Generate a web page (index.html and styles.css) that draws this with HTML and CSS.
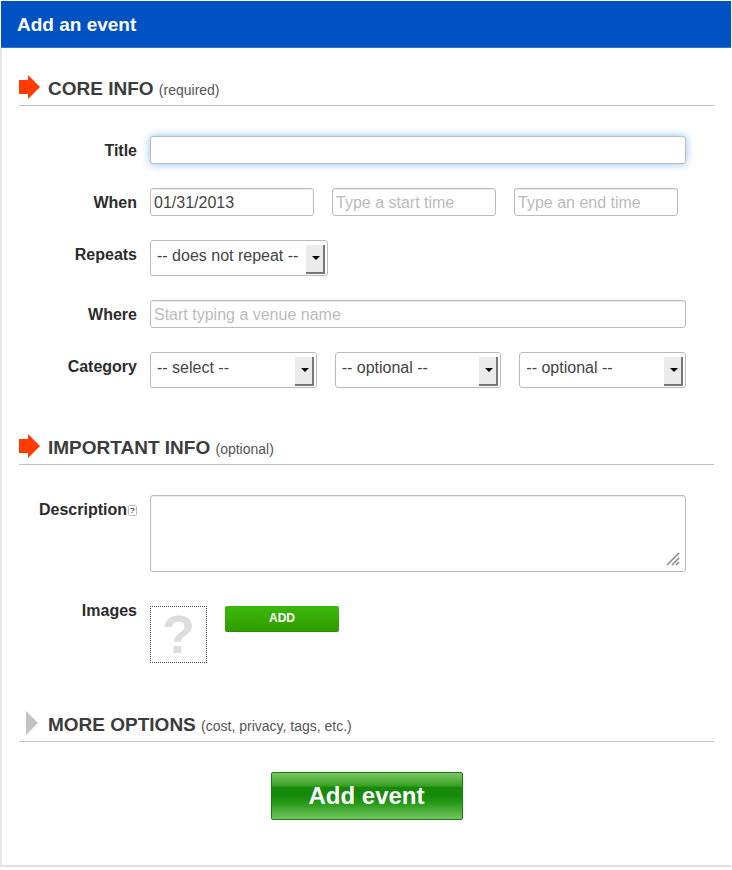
FILE: index.html
```html
<!DOCTYPE html>
<html lang="en">
<head>
<meta charset="utf-8">
<title>Add an event</title>
<link rel="stylesheet" href="styles.css">
</head>
<body>
<main class="panel">
  <h1 class="panel-title">Add an event</h1>
  <form class="form">
    <section class="section">
      <h2 class="section-head">
        <svg class="marker" viewBox="0 0 21 24" aria-hidden="true"><path fill="#ff3c00" d="M0 5h9V0l12 12L9 24v-5H0z"/></svg>
        <span>CORE INFO <small class="hint">(required)</small></span>
      </h2>
      <div class="fields">
        <div class="row">
          <label class="label" for="title">Title</label>
          <input class="input focused" id="title" type="text">
        </div>
        <div class="row">
          <label class="label" for="date">When</label>
          <div class="times">
            <input class="input" id="date" type="text" value="01/31/2013">
            <input class="input" type="text" placeholder="Type a start time" aria-label="Start time">
            <input class="input" type="text" placeholder="Type an end time" aria-label="End time">
          </div>
        </div>
        <div class="row">
          <label class="label" for="repeats">Repeats</label>
          <div class="select repeat"><select id="repeats"><option>-- does not repeat --</option></select></div>
        </div>
        <div class="row">
          <label class="label" for="where">Where</label>
          <input class="input" id="where" type="text" placeholder="Start typing a venue name">
        </div>
        <div class="row">
          <label class="label" for="category">Category</label>
          <div class="categories">
            <div class="select"><select id="category"><option>-- select --</option></select></div>
            <div class="select"><select aria-label="Second category"><option>-- optional --</option></select></div>
            <div class="select"><select aria-label="Third category"><option>-- optional --</option></select></div>
          </div>
        </div>
      </div>
    </section>

    <section class="section">
      <h2 class="section-head">
        <svg class="marker" viewBox="0 0 21 24" aria-hidden="true"><path fill="#ff3c00" d="M0 5h9V0l12 12L9 24v-5H0z"/></svg>
        <span>IMPORTANT INFO <small class="hint">(optional)</small></span>
      </h2>
      <div class="fields">
        <div class="row">
          <div class="label with-help">
            <label for="description">Description</label>
            <svg class="help" viewBox="0 0 9 11" aria-hidden="true"><rect x=".5" y=".5" width="8" height="10" rx="1" fill="#fff" stroke="#bbb"/><path d="M2.5 3.5h3.5v1.5l-2 1M3.5 7.5h1" fill="none" stroke="#555"/></svg>
          </div>
          <div class="text-wrap">
            <textarea class="input textarea" id="description"></textarea>
            <svg class="grip" viewBox="0 0 14 14" aria-hidden="true"><path d="M1 13 13 1M6 13l7-7M10 13l3-3" fill="none" stroke="#888" stroke-width="1.5"/></svg>
          </div>
        </div>
        <div class="row">
          <div class="label">Images</div>
          <div class="images">
            <div class="thumb">?</div>
            <button class="add" type="button">ADD</button>
          </div>
        </div>
      </div>
    </section>

    <section class="section">
      <h2 class="section-head">
        <svg class="marker" viewBox="0 0 21 24" aria-hidden="true"><path fill="#c2c2c2" d="M7 0l12 12L7 24z"/></svg>
        <span>MORE OPTIONS <small class="hint">(cost, privacy, tags, etc.)</small></span>
      </h2>
    </section>
    <button class="submit" type="submit">Add event</button>
  </form>
</main>
</body>
</html>
```
FILE: styles.css
```css
* {
  box-sizing: border-box;
}

body {
  margin: 0;
  background: #fff;
  color: #333;
  font-family: "Liberation Sans", Arial, sans-serif;
  font-size: 16px;
}

input, select, textarea, button {
  margin: 0;
  font: inherit;
  color: #444;
}

.panel {
  margin: 1px 1px 0 0;
  border-bottom: 2px solid #e0e0e0;
}

.panel-title {
  margin: 0 0 0 1px;
  padding: 2px 16px 0;
  border-bottom: 1px solid #3574cc;
  background: #0052c2;
  color: #fff;
  font-size: 19px;
  line-height: 44px;
}

.form {
  padding: 24px 17px 45px;
  border-left: 2px solid #e8e8e8;
}

.section-head {
  display: flex;
  align-items: center;
  gap: 8px;
  height: 34px;
  margin: 0;
  border-bottom: 1px solid #c0c0c0;
  color: #3c3c3c;
  font-size: 19px;
}

.marker {
  width: 21px;
  height: 24px;
  margin-bottom: 3px;
}

.hint {
  color: #555;
  font-size: 14px;
  font-weight: normal;
}

.fields {
  display: grid;
  gap: 24px;
  padding: 30px 28px 43px 0;
}

.row {
  display: grid;
  grid-template-columns: 118px minmax(0, 1fr);
  gap: 13px;
}

.label {
  padding-top: 2px;
  color: #2c2c2c;
  font-weight: bold;
  line-height: 26px;
  text-align: right;
}

.with-help {
  display: flex;
  align-items: center;
  justify-content: flex-end;
  gap: 1px;
  height: 28px;
}

.help {
  width: 9px;
  height: 11px;
}

.input {
  width: 100%;
  height: 28px;
  padding: 2px 3px 0;
  border: 1px solid #bbb;
  border-radius: 3px;
  background: #fff;
  box-shadow: inset 0 1px 1px rgba(0, 0, 0, .08);
  outline: none;
}

.input::placeholder {
  color: #bbb;
  opacity: 1;
}

.focused {
  box-shadow: 0 0 8px rgba(82, 168, 236, .7);
}

.times {
  display: grid;
  grid-template-columns: repeat(3, minmax(0, 1fr));
  gap: 18px;
  padding-right: 8px;
}

.categories {
  display: grid;
  grid-template-columns: repeat(3, minmax(0, 1fr));
  gap: 18px;
}

.select {
  position: relative;
}

.repeat {
  width: 178px;
}

.select select {
  display: block;
  width: 100%;
  height: 36px;
  padding: 0 24px 5px 6px;
  border: 1px solid #bbb;
  border-radius: 3px;
  background: #fff;
  appearance: none;
}

.select::before {
  content: "";
  position: absolute;
  top: 5px;
  right: 3px;
  width: 17px;
  height: 27px;
  border: solid #777;
  border-width: 0 2px 2px 0;
  background: #ebebeb;
  pointer-events: none;
}

.select::after {
  content: "";
  position: absolute;
  top: 16px;
  right: 8px;
  border: 4px solid transparent;
  border-top-color: #000;
  border-bottom: 0;
  pointer-events: none;
}

.text-wrap {
  position: relative;
}

.textarea {
  display: block;
  height: 77px;
  padding: 4px;
  resize: none;
}

.grip {
  position: absolute;
  right: 6px;
  bottom: 6px;
  width: 14px;
  height: 14px;
  pointer-events: none;
}

.images {
  display: flex;
  align-items: flex-start;
  gap: 18px;
  padding: 10px 0 2px;
}

.thumb {
  width: 57px;
  height: 57px;
  border: 1px dotted #444;
  color: #ddd;
  font-size: 54px;
  font-weight: bold;
  line-height: 55px;
  text-align: center;
}

.add {
  width: 114px;
  height: 26px;
  padding: 0 0 2px;
  border: 0;
  border-bottom: 1px solid #2a8a00;
  border-radius: 2px;
  background: linear-gradient(#3db80c, #2f9c00);
  color: #fff;
  font-size: 12px;
  font-weight: bold;
}

.submit {
  display: block;
  width: 192px;
  height: 48px;
  margin: 30px auto 0;
  padding: 0;
  border: 1px solid #12800a;
  border-radius: 2px;
  background: linear-gradient(#7cc568, #35a01d 29%, #178a0c 30%, #178a0c 50%, #259a16 65%, #74c460);
  color: #fff;
  font-size: 24px;
  font-weight: bold;
}
```
